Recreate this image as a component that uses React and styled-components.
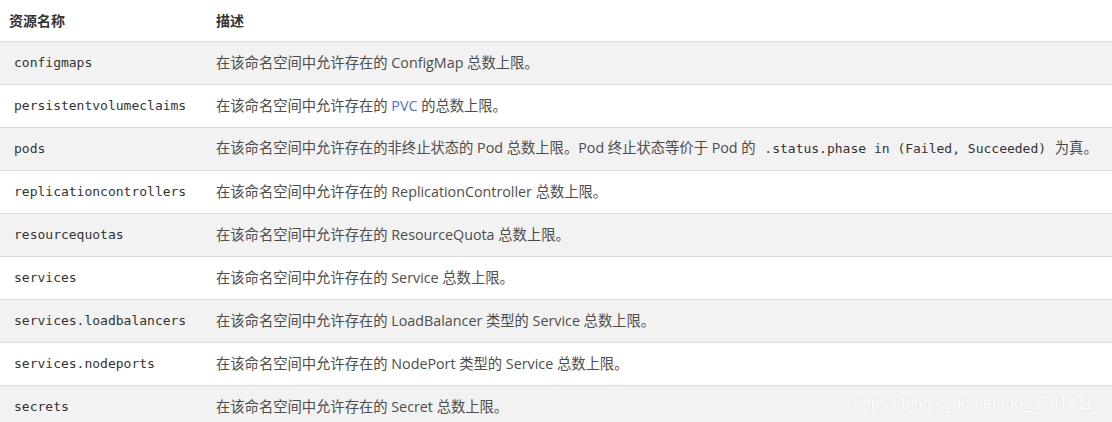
import React from 'react';
import styled, { createGlobalStyle } from 'styled-components';

const GlobalStyle = createGlobalStyle`
  body {
    margin: 0;
    background: #fff;
    font-family: "Open Sans", "Noto Sans CJK SC", sans-serif;
  }
`;

const Page = styled.div`
  position: relative;
  width: 1112px;
  height: 422px;
  overflow: hidden;
`;

const Table = styled.table`
  width: 1112px;
  border-collapse: collapse;
  table-layout: fixed;
  font-size: 14.3px;
  color: #4d4d4d;
`;

const HeadCell = styled.th`
  text-align: left;
  font-weight: bold;
  font-size: 14px;
  color: #333;
  height: 41px;
  padding: 0 9px;
  box-sizing: border-box;
  border-bottom: 1px solid #ddd;
  width: ${p => p.$width || 'auto'};
`;

const Row = styled.tr`
  background: ${p => (p.$odd ? '#f2f2f2' : '#fff')};
  border-bottom: 1px solid #ddd;
`;

const Cell = styled.td`
  height: 43px;
  padding: 0 9px;
  box-sizing: border-box;
  white-space: nowrap;
  line-height: 18px;
`;

const Code = styled.code`
  font-family: "DejaVu Sans Mono", "Liberation Mono", monospace;
  font-size: 13px;
  padding: 0 5px;
  color: #333;
`;

const Link = styled.a`
  color: #4d6de6;
  text-decoration: none;
`;

const Watermark = styled.div`
  position: absolute;
  right: 10px;
  bottom: 9px;
  font-family: "Liberation Sans", Arial, sans-serif;
  font-size: 16px;
  color: #fff;
  text-shadow: 0 0 1px #d0d0d0;
`;

const PRE = '在该命名空间中允许存在的';

const rows = [
  { name: 'configmaps', desc: <>{PRE} ConfigMap 总数上限。</> },
  { name: 'persistentvolumeclaims', desc: <>{PRE} <Link href="#">PVC</Link> 的总数上限。</> },
  {
    name: 'pods',
    desc: (
      <>
        {PRE}非终止状态的 Pod 总数上限。Pod 终止状态等价于 Pod 的 <Code>.status.phase in (Failed, Succeeded)</Code> 为真。
      </>
    ),
  },
  { name: 'replicationcontrollers', desc: <>{PRE} ReplicationController 总数上限。</> },
  { name: 'resourcequotas', desc: <>{PRE} ResourceQuota 总数上限。</> },
  { name: 'services', desc: <>{PRE} Service 总数上限。</> },
  { name: 'services.loadbalancers', desc: <>{PRE} LoadBalancer 类型的 Service 总数上限。</> },
  { name: 'services.nodeports', desc: <>{PRE} NodePort 类型的 Service 总数上限。</> },
  { name: 'secrets', desc: <>{PRE} Secret 总数上限。</> },
];

export default function App() {
  return (
    <Page>
      <GlobalStyle />
      <Table>
        <thead>
          <tr>
            <HeadCell $width="207px">资源名称</HeadCell>
            <HeadCell>描述</HeadCell>
          </tr>
        </thead>
        <tbody>
          {rows.map((r, i) => (
            <Row key={r.name} $odd={i % 2 === 0}>
              <Cell>
                <Code>{r.name}</Code>
              </Cell>
              <Cell>{r.desc}</Cell>
            </Row>
          ))}
        </tbody>
      </Table>
      <Watermark>https://blog.csdn.net/m0_37814112</Watermark>
    </Page>
  );
}
